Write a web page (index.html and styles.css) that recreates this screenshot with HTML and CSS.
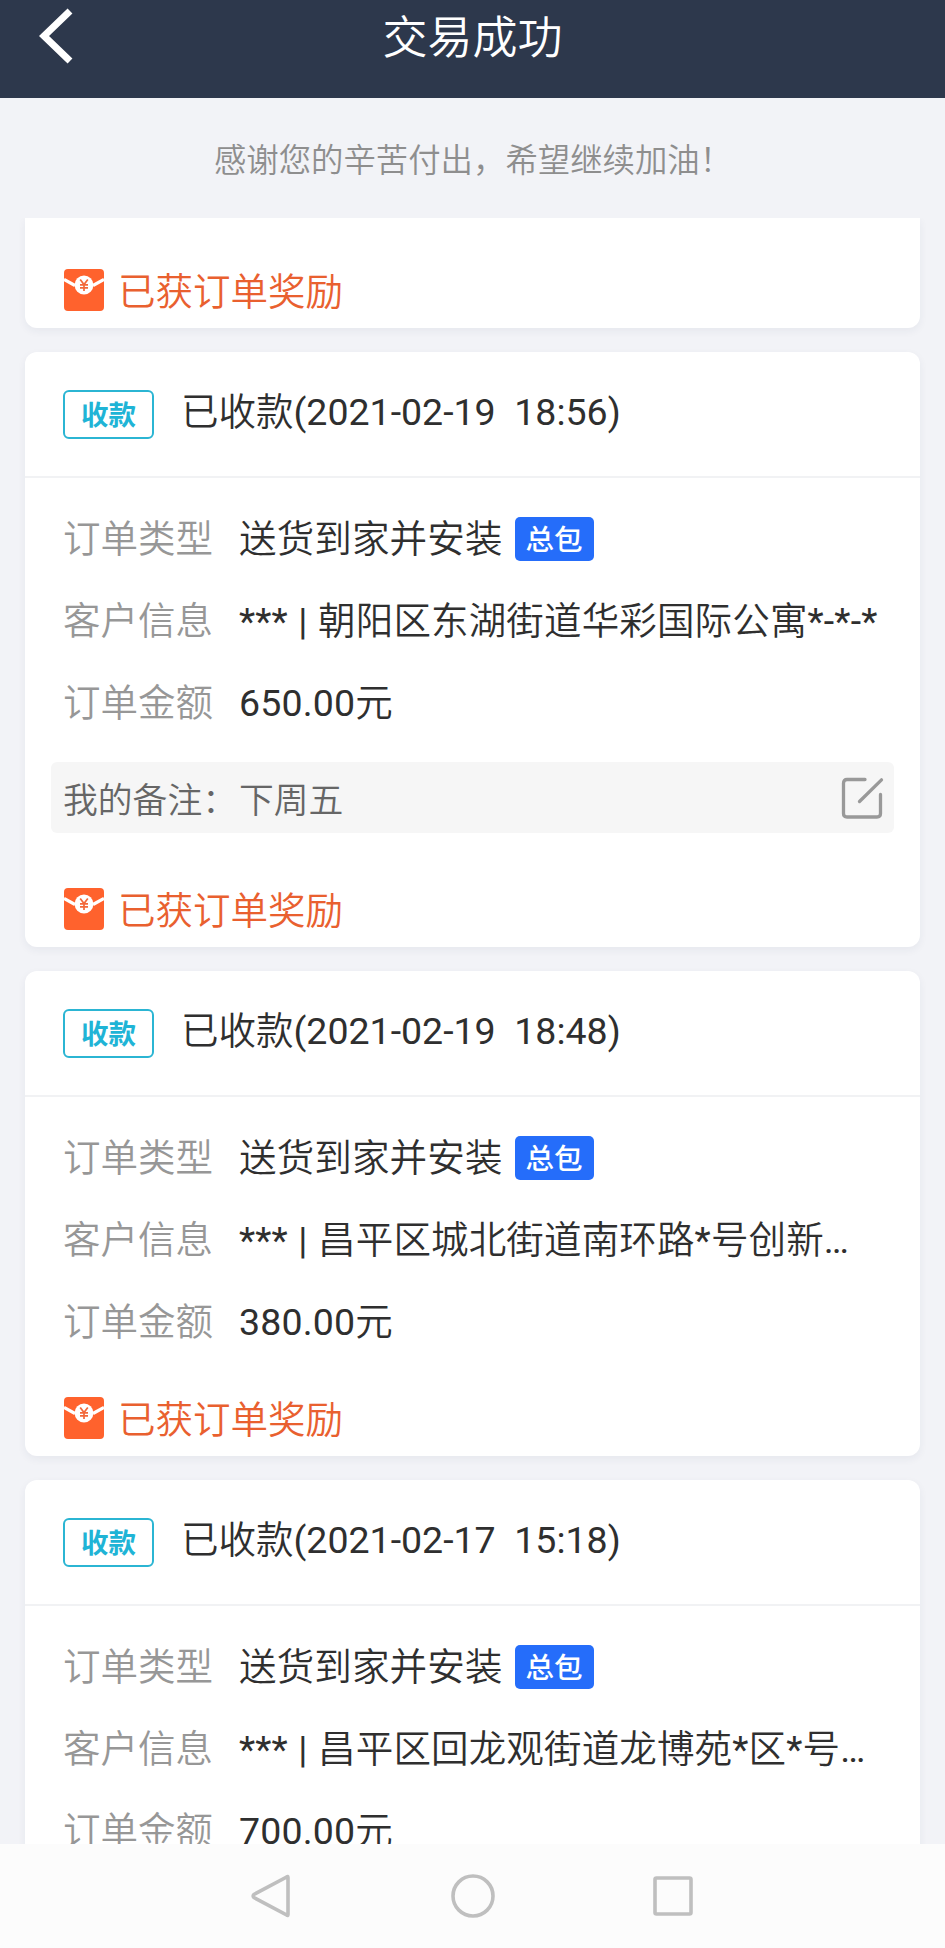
FILE: index.html
```html
<!DOCTYPE html>
<html lang="zh-CN">
<head>
  <meta charset="UTF-8">
  <title>交易成功</title>
  <link rel="stylesheet" href="styles.css">
</head>
<body>
  <!-- shared icons -->
  <svg class="sprite" width="0" height="0">
    <symbol id="icon-reward" viewBox="0 0 40 42">
      <rect width="40" height="42" rx="4" fill="#ff622d"/>
      <path d="M0 10.5 L11 16.5 M40 10.5 L29 16.5" stroke="#fff" stroke-width="3.2" fill="none"/>
      <circle cx="20" cy="16" r="9.4" fill="#fff"/>
      <path d="M16.2 10.5 L20 15.6 L23.8 10.5 M20 15.6 V22 M16 15.8 H24 M16 18.9 H24" stroke="#f2683a" stroke-width="1.7" fill="none"/>
    </symbol>
  </svg>

  <header class="header">
    <svg class="back" viewBox="0 0 34 56">
      <path d="M31 3 L5 28 L31 53" fill="none" stroke="#fff" stroke-width="7"/>
    </svg>
    <h1>交易成功</h1>
  </header>

  <p class="thanks">感谢您的辛苦付出，希望继续加油！</p>

  <main class="list">
    <section class="card card-cut">
      <div class="reward"><svg><use href="#icon-reward"/></svg><span>已获订单奖励</span></div>
    </section>

    <section class="card">
      <div class="card-head">
        <span class="status">收款</span>
        <span class="time">已收款(2021-02-19&nbsp; 18:56)</span>
      </div>
      <div class="card-body">
        <div class="row"><span class="label">订单类型</span><span class="value">送货到家并安装</span><span class="tag">总包</span></div>
        <div class="row"><span class="label">客户信息</span><span class="value">*** | 朝阳区东湖街道华彩国际公寓*-*-*</span></div>
        <div class="row"><span class="label">订单金额</span><span class="value">650.00元</span></div>
      </div>
      <div class="note">
        <span class="note-label">我的备注：</span><span class="note-text">下周五</span>
        <svg class="edit" viewBox="0 0 44 44">
          <path d="M25 3.5 H7 Q3.5 3.5 3.5 7 V37.5 Q3.5 41 7 41 H37 Q40.5 41 40.5 37.5 V18.5 M19.5 25.5 L41.5 3.8" fill="none" stroke="#999" stroke-width="3.3" stroke-linecap="round"/>
        </svg>
      </div>
      <div class="reward"><svg><use href="#icon-reward"/></svg><span>已获订单奖励</span></div>
    </section>

    <section class="card">
      <div class="card-head">
        <span class="status">收款</span>
        <span class="time">已收款(2021-02-19&nbsp; 18:48)</span>
      </div>
      <div class="card-body">
        <div class="row"><span class="label">订单类型</span><span class="value">送货到家并安装</span><span class="tag">总包</span></div>
        <div class="row"><span class="label">客户信息</span><span class="value">*** | 昌平区城北街道南环路*号创新…</span></div>
        <div class="row"><span class="label">订单金额</span><span class="value">380.00元</span></div>
      </div>
      <div class="reward"><svg><use href="#icon-reward"/></svg><span>已获订单奖励</span></div>
    </section>

    <section class="card">
      <div class="card-head">
        <span class="status">收款</span>
        <span class="time">已收款(2021-02-17&nbsp; 15:18)</span>
      </div>
      <div class="card-body">
        <div class="row"><span class="label">订单类型</span><span class="value">送货到家并安装</span><span class="tag">总包</span></div>
        <div class="row"><span class="label">客户信息</span><span class="value">*** | 昌平区回龙观街道龙博苑*区*号…</span></div>
        <div class="row"><span class="label">订单金额</span><span class="value">700.00元</span></div>
      </div>
    </section>
  </main>

  <nav class="navbar">
    <svg viewBox="0 0 44 44"><path d="M37 3.5 V40.5 Q37 42.3 35.6 41 L3 23.6 Q1.2 22 3 20.4 L35.6 3 Q37 1.8 37 3.5 Z" fill="none" stroke="#bfbfbf" stroke-width="3.6"/></svg>
    <svg viewBox="0 0 44 44"><circle cx="22" cy="22" r="20" fill="none" stroke="#bfbfbf" stroke-width="3.6"/></svg>
    <svg viewBox="0 0 44 44"><rect x="4" y="4" width="36" height="36" rx="1.5" fill="none" stroke="#bfbfbf" stroke-width="3.6"/></svg>
  </nav>
</body>
</html>
```
FILE: styles.css
```css
* {
  box-sizing: border-box;
}

body {
  display: flex;
  flex-direction: column;
  height: 100vh;
  margin: 0;
  overflow: hidden;
  background-color: #f2f3f7;
  font-family: Roboto, "Noto Sans CJK SC DemiLight", "Noto Sans CJK SC", sans-serif;
  font-size: 37.5px;
  font-weight: 400;
  color: #2f2f2f;
  white-space: nowrap;
}

svg {
  display: block;
  flex: none;
}

.sprite {
  position: absolute;
}

.header {
  display: grid;
  grid-template-columns: 120px 1fr 120px;
  grid-template-rows: 72px;
  flex: none;
  height: 98px;
  background-color: #2d384c;
  color: #fff;
}

.back {
  width: 34px;
  height: 56px;
  margin: 8px 0 0 39px;
}

h1 {
  margin: 0;
  font-size: 45px;
  font-weight: 350;
  line-height: 77px;
  text-align: center;
}

.thanks {
  flex: none;
  height: 120px;
  margin: 0;
  padding-left: 1px;
  font-size: 32.4px;
  font-weight: 350;
  line-height: 126px;
  text-align: center;
  color: #8e8e8e;
}

.list {
  flex: 1;
  min-height: 0;
  padding: 0 25px;
  overflow: hidden;
}

.card {
  margin-bottom: 24px;
  border-radius: 12px;
  background-color: #fff;
  box-shadow: 0 3px 8px rgba(40, 50, 80, 0.06);
}

.card-cut {
  padding-top: 34px;
  border-radius: 0 0 12px 12px;
}

.card-head {
  display: flex;
  align-items: center;
  height: 126px;
  padding: 0 38px;
  border-bottom: 2px solid #f1f2f4;
}

.status {
  width: 91px;
  height: 49px;
  border: 2px solid #2bb5d3;
  border-radius: 6px;
  font-family: "Noto Sans CJK SC", sans-serif;
  font-size: 27.5px;
  font-weight: 700;
  line-height: 42px;
  text-align: center;
  color: #1fb4d6;
}

.time {
  margin-left: 27px;
  padding-bottom: 12px;
}

.card-body {
  padding: 20px 38px 17px;
}

.row {
  display: flex;
  align-items: center;
  height: 82px;
}

.label {
  width: 176px;
  padding-bottom: 7px;
  font-weight: 350;
  color: #979797;
}

.value {
  padding-bottom: 8px;
  letter-spacing: 0.15px;
  word-spacing: 1px;
}

.tag {
  width: 79px;
  height: 44px;
  margin-left: 12px;
  border-radius: 5px;
  background-color: #256dfa;
  font-family: "Noto Sans CJK SC", sans-serif;
  font-size: 28.5px;
  font-weight: 500;
  line-height: 42px;
  text-align: center;
  color: #fff;
}

.note {
  display: flex;
  align-items: center;
  height: 71px;
  margin: 1px 26px 38px;
  padding: 0 10px 0 12px;
  border-radius: 6px;
  background-color: #f6f6f6;
  font-size: 34.8px;
  font-weight: 350;
  color: #666;
}

.note-label {
  width: 176px;
}

.edit {
  width: 44px;
  height: 44px;
  margin-left: auto;
}

.reward {
  display: flex;
  align-items: center;
  height: 76px;
  padding-left: 39px;
  font-weight: 350;
  color: #e9602f;
}

.reward svg {
  width: 40px;
  height: 42px;
  margin-right: 14px;
}

.reward span {
  padding-bottom: 3px;
}

.navbar {
  display: flex;
  flex: none;
  justify-content: center;
  align-items: center;
  gap: 156px;
  height: 104px;
  background-color: #fcfcfc;
}

.navbar svg {
  width: 44px;
  height: 44px;
}
```
